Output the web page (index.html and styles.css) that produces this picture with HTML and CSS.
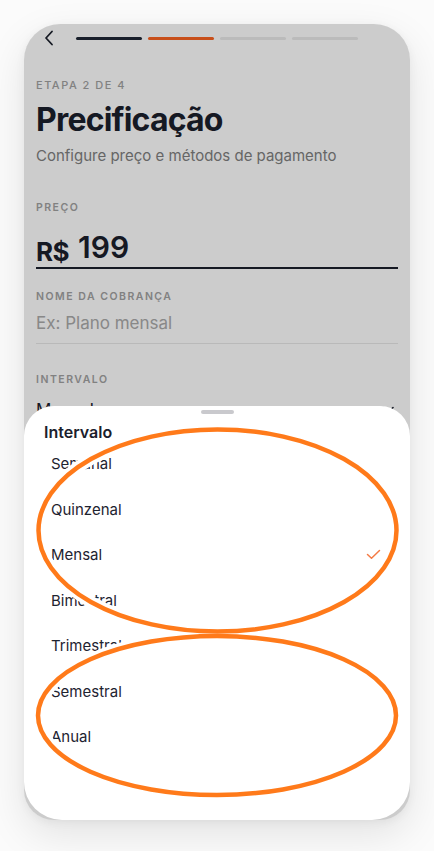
FILE: index.html
```html
<!DOCTYPE html>
<html lang="pt-BR">
<head>
<meta charset="utf-8">
<title>Precificação</title>
<link rel="stylesheet" href="styles.css">
</head>
<body>
<div class="frame">
  <div class="screen">
    <div class="topbar">
      <svg class="back" width="10" height="16" viewBox="0 0 10 16"><path d="M8 1.5 L2 8 L8 14.5" fill="none" stroke="#1b202c" stroke-width="1.8" stroke-linecap="round" stroke-linejoin="round"/></svg>
      <div class="steps">
        <span class="step done"></span>
        <span class="step current"></span>
        <span class="step"></span>
        <span class="step"></span>
      </div>
    </div>
    <div class="content">
      <div class="eyebrow">ETAPA 2 DE 4</div>
      <h1 class="title">Precificação</h1>
      <p class="subtitle">Configure preço e métodos de pagamento</p>

      <div class="field price-field">
        <div class="label">PREÇO</div>
        <div class="price"><span class="currency">R$</span><span class="amount">199</span></div>
      </div>

      <div class="field name-field">
        <div class="label">NOME DA COBRANÇA</div>
        <div class="placeholder">Ex: Plano mensal</div>
      </div>

      <div class="field interval-field">
        <div class="label">INTERVALO</div>
        <div class="select"><span>Mensal</span>
          <svg width="12" height="8" viewBox="0 0 12 8"><path d="M1 1.5 L6 6.5 L11 1.5" fill="none" stroke="#1b202c" stroke-width="1.6" stroke-linecap="round" stroke-linejoin="round"/></svg>
        </div>
      </div>
    </div>
  </div>
  <div class="scrim"></div>
  <div class="sheet">
    <div class="handle"></div>
    <div class="sheet-title">Intervalo</div>
    <ul class="options">
      <li class="option">Semanal</li>
      <li class="option">Quinzenal</li>
      <li class="option selected">Mensal
        <svg class="check" width="15" height="11" viewBox="0 0 15 11"><path d="M1.5 5.5 L5.5 9.2 L13.5 1.5" fill="none" stroke="#f47b45" stroke-width="1.5" stroke-linecap="round" stroke-linejoin="round"/></svg>
      </li>
      <li class="option">Bimestral</li>
      <li class="option">Trimestral</li>
      <li class="option">Semestral</li>
      <li class="option">Anual</li>
    </ul>
  </div>
</div>
<svg class="annotations" width="434" height="851" viewBox="0 0 434 851">
  <ellipse cx="217.5" cy="530.5" rx="179" ry="101" fill="none" stroke="#ffffff" stroke-width="12"/>
  <ellipse cx="217" cy="715.5" rx="179" ry="79.5" fill="none" stroke="#ffffff" stroke-width="12"/>
  <ellipse cx="217.5" cy="530.5" rx="179" ry="101" fill="none" stroke="#ff7a1a" stroke-width="4.5"/>
  <ellipse cx="217" cy="715.5" rx="179" ry="79.5" fill="none" stroke="#ff7a1a" stroke-width="4.5"/>
</svg>
</body>
</html>
```

FILE: styles.css
```css
* { box-sizing: border-box; }

html, body {
  margin: 0;
  padding: 0;
}

body {
  width: 434px;
  height: 851px;
  background: #fbfbfb;
  font-family: Inter, "Noto Sans", "Liberation Sans", sans-serif;
  color: #1b202c;
  position: relative;
  overflow: hidden;
}

.frame {
  position: relative;
  margin: 24px 0 0 24px;
  width: 386px;
  height: 796px;
  border-radius: 36px 36px 30px 30px;
  overflow: hidden;
  background: #ffffff;
  box-shadow: 0 14px 40px rgba(0, 0, 0, 0.10), 0 2px 10px rgba(0, 0, 0, 0.05);
}

.screen {
  height: 100%;
}

.topbar {
  display: flex;
  align-items: center;
  height: 28px;
  padding: 0 20px;
}

.back {
  display: block;
  flex: none;
}

.steps {
  display: flex;
  gap: 6px;
  margin-left: 22px;
}

.step {
  display: block;
  width: 66px;
  height: 3px;
  border-radius: 2px;
  background: #eaeaea;
}

.step.done { background: #202736; }
.step.current { background: #fb6321; }

.content {
  padding: 0 12px;
}

.eyebrow {
  margin-top: 26px;
  font-size: 11px;
  line-height: 14px;
  letter-spacing: 1.5px;
  color: #a2a2a2;
  font-weight: 500;
}

.title {
  margin: 8px 0 0;
  font-size: 32px;
  line-height: 40px;
  font-weight: 700;
  letter-spacing: -0.8px;
  color: #1b202c;
}

.subtitle {
  margin: 6px 0 0;
  font-size: 15px;
  line-height: 20px;
  color: #808080;
}

.label {
  font-size: 10.5px;
  line-height: 14px;
  letter-spacing: 1.5px;
  font-weight: 600;
  color: #a2a2a2;
}

.price-field { margin-top: 35px; }

.price {
  display: flex;
  align-items: baseline;
  height: 54px;
  padding-top: 14px;
  border-bottom: 2px solid #1b202c;
}

.currency {
  font-size: 26px;
  font-weight: 700;
  letter-spacing: -0.5px;
  position: relative;
  top: 3px;
}

.amount {
  margin-left: 9px;
  font-size: 30px;
  font-weight: 600;
}

.name-field { margin-top: 21px; }

.placeholder {
  height: 40px;
  padding-top: 8px;
  font-size: 17px;
  line-height: 22px;
  color: #aaaaaa;
  border-bottom: 1px solid #e8e8e8;
}

.interval-field { margin-top: 29px; }

.select {
  display: flex;
  align-items: center;
  justify-content: space-between;
  padding-top: 13px;
  font-size: 17px;
  padding-right: 4px;
}

.scrim {
  position: absolute;
  inset: 0;
  background: rgba(0, 0, 0, 0.2);
}

.sheet {
  position: absolute;
  left: 0;
  right: 0;
  top: 382px;
  bottom: 0;
  background: #ffffff;
  border-radius: 30px 30px 38px 38px;
  padding-top: 4px;
}

.handle {
  width: 33px;
  height: 4px;
  border-radius: 2px;
  background: #c9c9cd;
  margin: 0 auto;
}

.sheet-title {
  margin-top: 9px;
  padding-left: 20px;
  font-size: 16px;
  line-height: 18px;
  font-weight: 600;
  color: #1b202c;
}

.options {
  list-style: none;
  margin: 0;
  padding: 0;
}

.option {
  display: flex;
  align-items: center;
  justify-content: space-between;
  height: 45.5px;
  padding: 0 29px 0 27px;
  font-size: 15px;
  color: #1e2330;
}

.check { display: block; }

.annotations {
  position: absolute;
  left: 0;
  top: 0;
  pointer-events: none;
}
```
